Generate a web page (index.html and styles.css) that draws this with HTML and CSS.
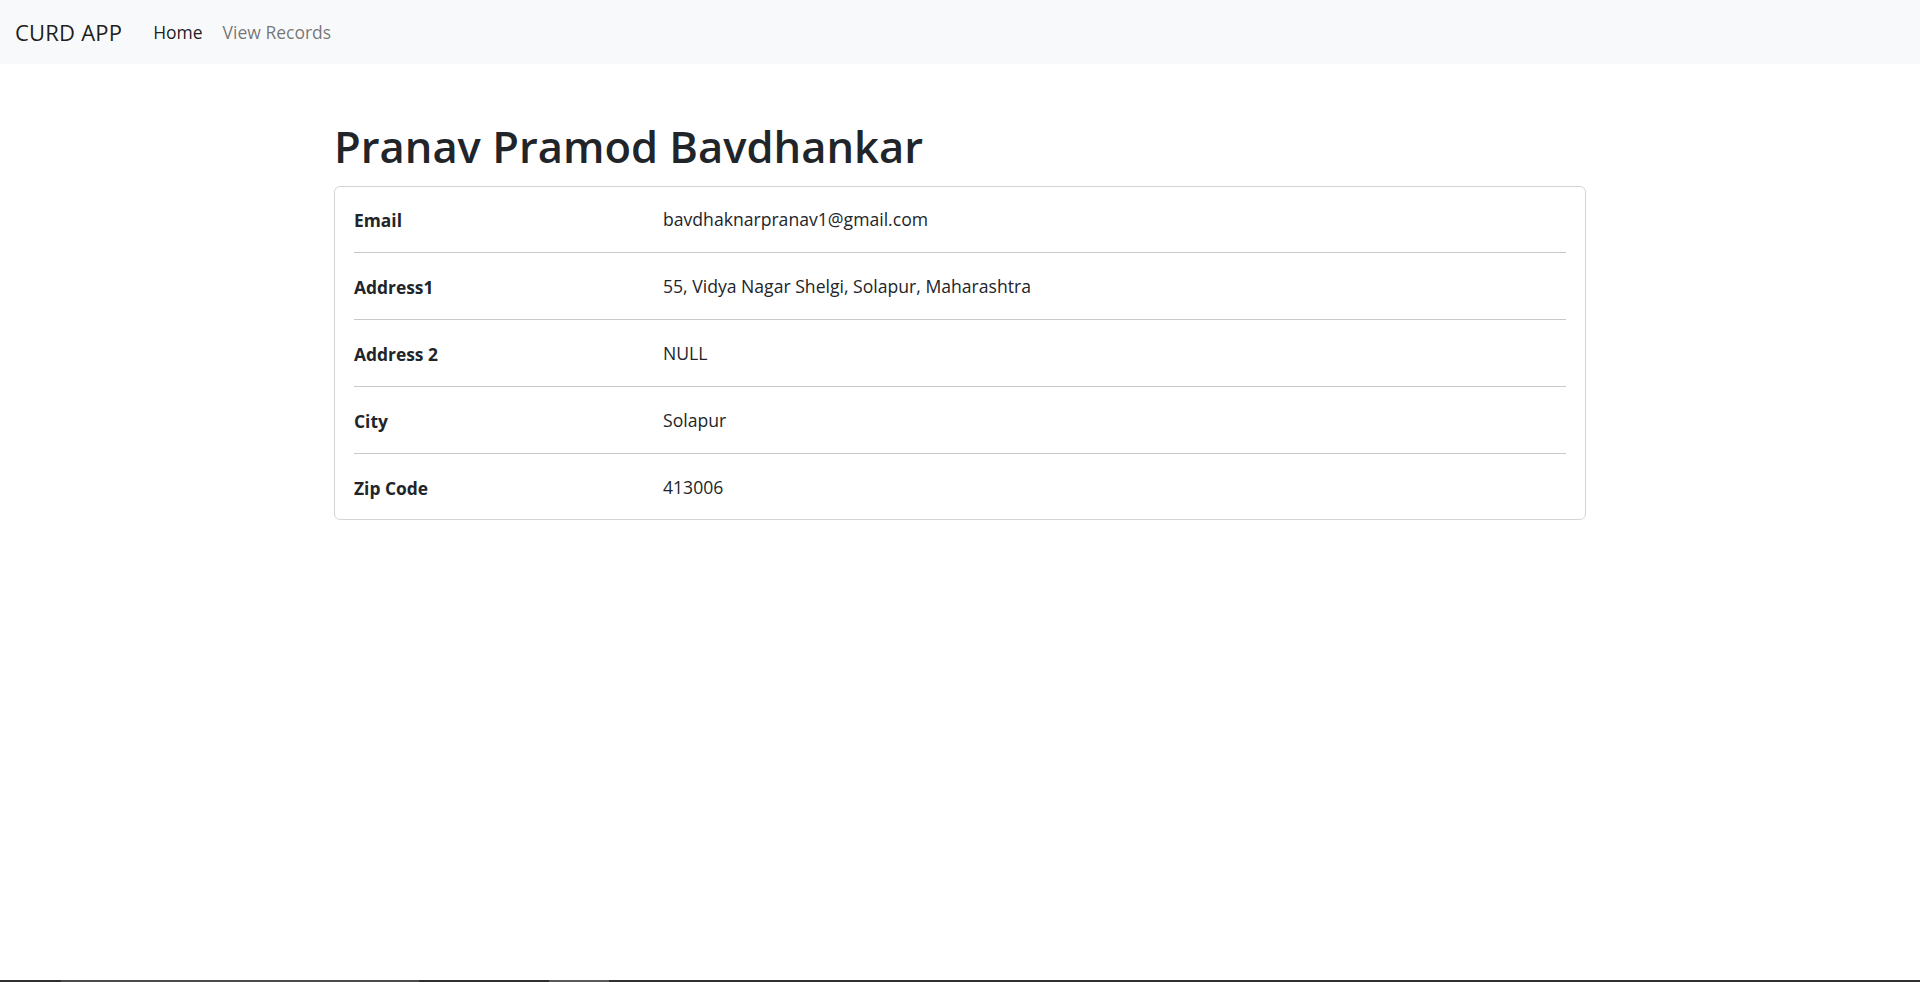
FILE: index.html
```html
<!DOCTYPE html>
<html lang="en">
<head>
<meta charset="utf-8">
<title>CURD APP</title>
<link rel="stylesheet" href="styles.css">
</head>
<body>
<nav class="navbar">
  <a class="brand" href="#">CURD APP</a>
  <ul class="nav">
    <li><a class="nav-link active" href="#">Home</a></li>
    <li><a class="nav-link" href="#">View Records</a></li>
  </ul>
</nav>
<main class="container">
  <h1 class="title">Pranav Pramod Bavdhankar</h1>
  <div class="card">
    <div class="row"><div class="label">Email</div><div class="value">bavdhaknarpranav1@gmail.com</div></div>
    <hr class="sep">
    <div class="row"><div class="label">Address1</div><div class="value">55, Vidya Nagar Shelgi, Solapur, Maharashtra</div></div>
    <hr class="sep">
    <div class="row"><div class="label">Address 2</div><div class="value">NULL</div></div>
    <hr class="sep">
    <div class="row"><div class="label">City</div><div class="value">Solapur</div></div>
    <hr class="sep">
    <div class="row"><div class="label">Zip Code</div><div class="value">413006</div></div>
  </div>
</main>
<div class="taskbar"><span class="seg seg-a"></span><span class="seg seg-b"></span></div>
</body>
</html>
```

FILE: styles.css
```css
* { box-sizing: border-box; }
html, body { margin: 0; padding: 0; }
body {
  font-family: "Open Sans", "Noto Sans", "Liberation Sans", sans-serif;
  color: #212529;
  background: #fff;
  font-size: 18px;
}
.navbar {
  height: 64px;
  background: #f8f9fa;
  display: flex;
  align-items: center;
  padding: 0 15px;
}
.brand {
  font-size: 22px;
  color: rgba(0,0,0,.9);
  text-decoration: none;
  margin-right: 31px;
  letter-spacing: 0.2px;
}
.nav {
  list-style: none;
  margin: 0;
  padding: 0;
  display: flex;
  gap: 20px;
}
.nav-link {
  font-size: 17.5px;
  color: rgba(0,0,0,.55);
  text-decoration: none;
}
.nav-link.active { color: rgba(0,0,0,.9); }
.container {
  width: 1252px;
  margin: 0 auto;
  padding-top: 54px;
}
.title {
  margin: 0 0 10px;
  font-size: 43.5px;
  line-height: 58px;
  font-weight: 600;
  color: #212529;
}
.card {
  border: 1px solid #d3d4d5;
  border-radius: 6px;
  padding: 18px 19px;
}
.row {
  display: grid;
  grid-template-columns: 309px 1fr;
  line-height: 28px;
  height: 28px;
  font-size: 17.6px;
}
.label { font-weight: 700; font-size: 17.4px; padding-top: 1px; }
.sep {
  margin: 19px 0;
  border: 0;
  border-top: 1px solid #c8c9ca;
  height: 0;
}
.taskbar {
  position: fixed;
  left: 0;
  right: 0;
  bottom: 0;
  height: 2px;
  background: #303030;
}
.seg { position: absolute; top: 0; height: 2px; background: #4a4a4a; }
.seg-a { left: 61px; width: 358px; }
.seg-b { left: 549px; width: 60px; background: #5a5a5a; }
```
